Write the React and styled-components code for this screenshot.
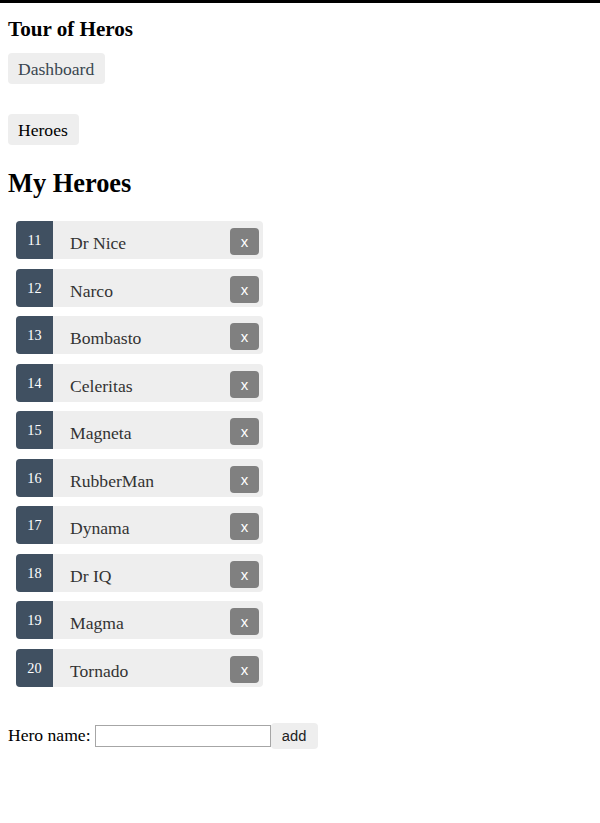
import React from "react";
import styled, { createGlobalStyle } from "styled-components";

const GlobalStyle = createGlobalStyle`
  html, body { margin: 0; padding: 0; background: #fff; }
  body { font-family: "Liberation Serif", "Times New Roman", serif; font-size: 17.6px; color: #000; }
`;

const TopBar = styled.div`
  height: 3px;
  background: #000;
`;

const Page = styled.div`
  padding: 0 8px;
  display: flex;
  flex-direction: column;
  align-items: flex-start;
`;

const Title = styled.h1`
  margin: 14px 0 0;
  font-size: 21.1px;
  line-height: 24px;
  font-weight: bold;
`;

const Nav = styled.nav`
  margin-top: 12px;
  display: flex;
  flex-direction: column;
  align-items: flex-start;
  gap: 30px;
`;

const NavLink = styled.a`
  display: inline-block;
  padding: 6px 11px 4px 10px;
  line-height: 21px;
  font-size: 17.6px;
  background: #eee;
  border-radius: 4px;
  text-decoration: none;
  color: ${(p) => (p.$active ? "#000" : "#3a4650")};
  cursor: pointer;
`;

const Heading = styled.h2`
  margin: 23px 0 0;
  font-size: 26.4px;
  line-height: 30px;
  font-weight: bold;
`;

const HeroList = styled.ul`
  list-style: none;
  margin: 23px 0 0 8px;
  padding: 0;
  width: 247px;
  display: flex;
  flex-direction: column;
  gap: 9.5px;
`;

const HeroRow = styled.li`
  height: 38px;
  display: flex;
  align-items: stretch;
  background: #eee;
  border-radius: 4px;
  cursor: pointer;
`;

const Badge = styled.span`
  width: 37px;
  flex: none;
  background: #405061;
  color: #fff;
  font-size: 14.3px;
  border-radius: 4px 0 0 4px;
  display: flex;
  justify-content: center;
  padding-top: 11px;
  box-sizing: border-box;
  line-height: 16px;
`;

const HeroName = styled.span`
  flex: 1;
  padding-left: 17px;
  padding-top: 12px;
  line-height: 21px;
  color: #333;
  font-size: 17.6px;
`;

const DeleteButton = styled.button`
  align-self: flex-start;
  margin: 7px 4px 0 0;
  width: 29px;
  height: 27px;
  border: none;
  border-radius: 4px;
  background: #808080;
  color: #fff;
  font-family: "Liberation Sans", Arial, sans-serif;
  font-size: 15px;
  padding: 0;
  cursor: pointer;
`;

const Form = styled.div`
  margin-top: 36px;
  display: flex;
  align-items: center;
  height: 26px;
`;

const Label = styled.label`
  font-size: 17.6px;
  margin-right: 4px;
  line-height: 22px;
  padding-bottom: 1px;
`;

const NameInput = styled.input`
  width: 176px;
  height: 22px;
  box-sizing: border-box;
  border: 1px solid #a6a6a6;
  padding: 1px 2px;
  margin: 0;
  font-size: 14px;
  outline: none;
`;

const AddButton = styled.button`
  width: 47px;
  height: 26px;
  border: none;
  border-radius: 4px;
  background: #eee;
  color: #222;
  font-family: "Liberation Sans", Arial, sans-serif;
  font-size: 14.7px;
  padding: 0;
  cursor: pointer;
`;

const heroes = [
  { id: 11, name: "Dr Nice" },
  { id: 12, name: "Narco" },
  { id: 13, name: "Bombasto" },
  { id: 14, name: "Celeritas" },
  { id: 15, name: "Magneta" },
  { id: 16, name: "RubberMan" },
  { id: 17, name: "Dynama" },
  { id: 18, name: "Dr IQ" },
  { id: 19, name: "Magma" },
  { id: 20, name: "Tornado" },
];

export default function App() {
  return (
    <>
      <GlobalStyle />
      <TopBar />
      <Page>
        <Title>Tour of Heros</Title>
        <Nav>
          <NavLink>Dashboard</NavLink>
          <NavLink $active>Heroes</NavLink>
        </Nav>
        <Heading>My Heroes</Heading>
        <HeroList>
          {heroes.map((h) => (
            <HeroRow key={h.id}>
              <Badge>{h.id}</Badge>
              <HeroName>{h.name}</HeroName>
              <DeleteButton>x</DeleteButton>
            </HeroRow>
          ))}
        </HeroList>
        <Form>
          <Label>Hero name:</Label>
          <NameInput />
          <AddButton>add</AddButton>
        </Form>
      </Page>
    </>
  );
}
